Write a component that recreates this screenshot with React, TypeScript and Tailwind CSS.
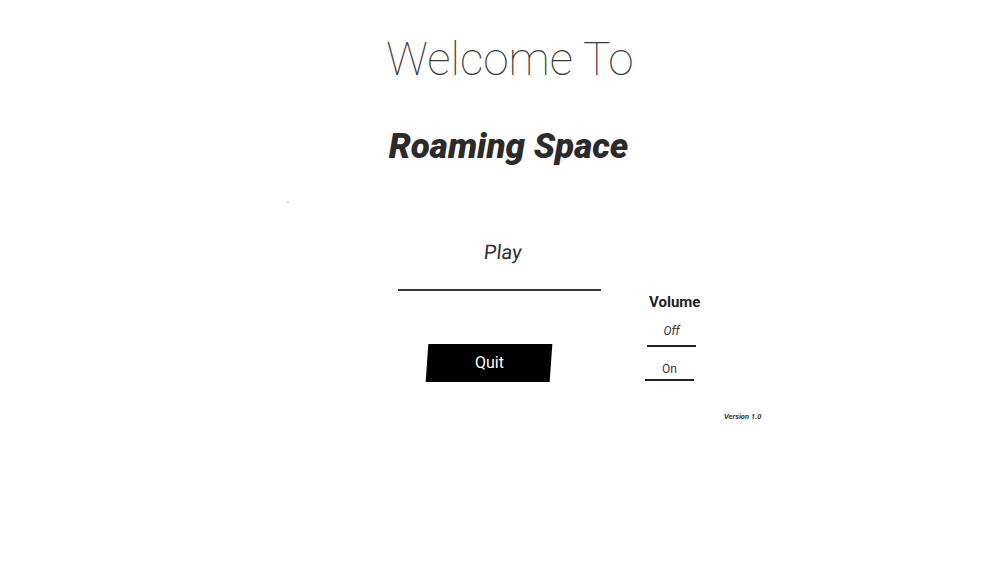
export default function App() {
  return (
    <div
      className="w-[1000px] h-[563px] bg-white flex flex-col overflow-hidden"
      style={{ fontFamily: "Roboto, 'Liberation Sans', sans-serif" }}
    >
      <div className="mt-[36px] pl-[20px] text-center text-[46px] leading-none font-thin text-[#3a3a3a]">
        Welcome To
      </div>
      <div className="mt-[47px] pl-[17px] text-center text-[35px] leading-none font-black italic text-[#2b2b2b]">
        Roaming Space
      </div>
      <div className="mt-[37px] ml-[287px] w-[2px] h-[2px] bg-[#d4d4d4]" />
      <div className="flex flex-row items-start">
        <div className="ml-[398px] w-[203px] flex flex-col">
          <div className="mt-[39px] pl-[6px] text-center text-[20px] leading-none text-[#2e2e2e]">
            <span className="inline-block -skew-x-6">Play</span>
          </div>
          <div className="mt-[27px] h-[2px] bg-[#3a3a3a]" />
          <div className="mt-[53px] ml-[29px] w-[124px] h-[38px] bg-black -skew-x-[4deg] flex items-center justify-center">
            <span className="skew-x-[4deg] text-white text-[16px] leading-none">Quit</span>
          </div>
        </div>
        <div className="ml-[44px] flex flex-col">
          <div className="mt-[92px] pl-[4px] text-[15px] leading-none font-bold text-[#222]">
            Volume
          </div>
          <div className="mt-[15px] ml-[2px] w-[49px] flex flex-col">
            <div className="text-center text-[12px] leading-none italic text-[#333]">Off</div>
            <div className="mt-[8px] h-[2px] bg-[#222]" />
          </div>
          <div className="mt-[16px] w-[49px] flex flex-col">
            <div className="text-center text-[12px] leading-none text-[#333]">On</div>
            <div className="mt-[4px] h-[2px] bg-[#222]" />
          </div>
          <div className="mt-[32px] ml-[79px] text-[7.5px] leading-none font-bold italic text-[#333] whitespace-nowrap">
            Version 1.0
          </div>
        </div>
      </div>
    </div>
  );
}
